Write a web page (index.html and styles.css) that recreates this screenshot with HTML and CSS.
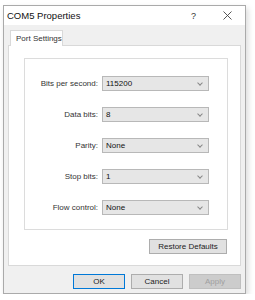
FILE: index.html
```html
<!DOCTYPE html>
<html lang="en">
<head>
    <meta charset="UTF-8">
    <title>COM5 Properties</title>
    <link rel="stylesheet" href="styles.css">
</head>
<body>

    <div class="window">
        <div class="titlebar">
            <span class="title">COM5 Properties</span>
            <span class="help">?</span>
            <span class="close">
                <svg width="9" height="9" viewBox="0 0 9 9"><path d="M0.5 0.5 L8.5 8.5 M8.5 0.5 L0.5 8.5" stroke="#444" stroke-width="0.9"/></svg>
            </span>
        </div>

        <div class="body">
            <div class="tabs">
                <div class="tab">Port Settings</div>
            </div>
            <div class="panel">
                <div class="group">
                    <div class="row">
                        <label>Bits per second:</label>
                        <div class="combo"><span>115200</span><i></i></div>
                    </div>
                    <div class="row">
                        <label>Data bits:</label>
                        <div class="combo"><span>8</span><i></i></div>
                    </div>
                    <div class="row">
                        <label>Parity:</label>
                        <div class="combo"><span>None</span><i></i></div>
                    </div>
                    <div class="row">
                        <label>Stop bits:</label>
                        <div class="combo"><span>1</span><i></i></div>
                    </div>
                    <div class="row">
                        <label>Flow control:</label>
                        <div class="combo"><span>None</span><i></i></div>
                    </div>
                </div>
                <div class="restore">
                    <button class="btn wide">Restore Defaults</button>
                </div>
            </div>
            <div class="actions">
                <button class="btn default">OK</button>
                <button class="btn">Cancel</button>
                <button class="btn disabled">Apply</button>
            </div>
        </div>
    </div>

</body>
</html>
```

FILE: styles.css
```css
body {
    margin: 0;
    background-color: #fff;
    font-family: "Liberation Sans", Arial, sans-serif;
    font-size: 8px;
    color: #222;
}
.window {
    margin: 5px 0 0 3px;
    width: 241px;
    height: 287px;
    border: 1px solid #aaa;
    background-color: #f0f0f0;
    box-shadow: 2px 3px 6px rgba(0, 0, 0, 0.15);
    display: flex;
    flex-direction: column;
}
.titlebar {
    height: 19px;
    background-color: #fff;
    display: flex;
    align-items: center;
    padding-left: 3px;
}
.title {
    font-size: 9.5px;
    flex: 1;
    color: #111;
}
.help {
    font-size: 9px;
    width: 32px;
    color: #333;
}
.close {
    width: 22px;
    display: flex;
}
.body {
    flex: 1;
    display: flex;
    flex-direction: column;
    padding: 5px 4px 0 4px;
}
.tabs {
    display: flex;
    padding-left: 2px;
    height: 15px;
}
.tab {
    background-color: #fff;
    border: 1px solid #d9d9d9;
    border-bottom: none;
    padding: 3px 0 0 5px;
    width: 46px;
    white-space: nowrap;
    margin-bottom: -1px;
    position: relative;
    color: #333;
}
.panel {
    background-color: #fff;
    border: 1px solid #d9d9d9;
    height: 221px;
    box-sizing: border-box;
    padding: 12px 12px 0 15px;
}
.group {
    border: 1px solid #dcdcdc;
    height: 172px;
    box-sizing: border-box;
    padding-top: 17px;
    display: flex;
    flex-direction: column;
    gap: 16px;
}
.row {
    display: flex;
    align-items: center;
}
.row label {
    width: 73px;
    text-align: right;
    margin-right: 4px;
    color: #333;
}
.combo {
    width: 107px;
    height: 15px;
    box-sizing: border-box;
    border: 1px solid #b8b8b8;
    background-color: #e6e6e6;
    display: flex;
    align-items: center;
    padding-left: 3px;
    color: #111;
}
.combo span {
    flex: 1;
}
.combo i {
    width: 3px;
    height: 3px;
    border-right: 1px solid #888;
    border-bottom: 1px solid #888;
    transform: rotate(45deg);
    margin: 0 6px 2px 0;
}
.restore {
    display: flex;
    justify-content: flex-end;
    margin-top: 9px;
}
.btn {
    font-family: "Liberation Sans", Arial, sans-serif;
    font-size: 8px;
    width: 52px;
    height: 15px;
    padding: 0;
    border: 1px solid #adadad;
    background-color: #e1e1e1;
    color: #222;
}
.btn.wide {
    width: 78px;
    margin-right: 1px;
}
.actions {
    display: flex;
    justify-content: flex-end;
    gap: 6px;
    margin-top: 8px;
}
.btn.default {
    border: 1px solid #0078d7;
}
.btn.disabled {
    background-color: #ccc;
    border-color: #bfbfbf;
    color: #a0a0a0;
}
```
